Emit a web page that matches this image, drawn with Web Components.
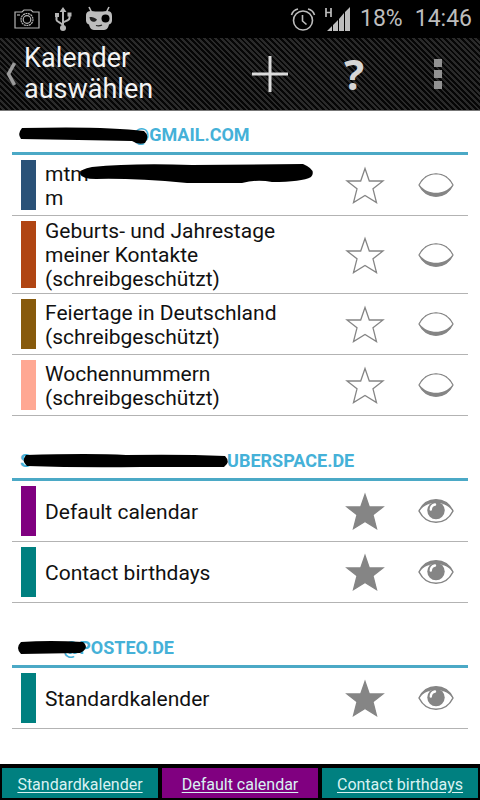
<!DOCTYPE html>
<html lang="de">
<head>
<meta charset="utf-8">
<meta name="viewport" content="width=device-width, initial-scale=1">
<title>Kalender auswählen</title>
<style>
body{margin:0;background:#fff;color:#111;font-family:Roboto,"Liberation Sans",sans-serif}
</style>
</head>
<body>
<calendar-app></calendar-app>
<script>
const define = (name, html, setup) => {
  const template = document.createElement('template');
  template.innerHTML = html;
  customElements.define(name, class extends HTMLElement {
    constructor() {
      super();
      this.attachShadow({mode: 'open'}).append(template.content.cloneNode(true));
    }
    connectedCallback() { if (setup) setup(this, this.shadowRoot); }
  });
};

define('status-bar', `
<style>
:host{display:flex;align-items:center;justify-content:space-between;height:38px;padding:0 8px 0 13px;background:#000;color:#bdbdbd;font-size:23px;line-height:38px}
div{display:flex;align-items:center}
.left{gap:13px}.right{gap:9px}
svg{display:block}
.time{margin-left:3px}
</style>
<div class="left">
<svg width="28" height="24" viewBox="0 0 28 24" fill="none" stroke="#b5b5b5" stroke-width="1.2"><path d="M2 5h7l2-2h7l2 2h6v16H2z"/><circle cx="14" cy="12.500" r="6" stroke-dasharray="2 .6"/><circle cx="14" cy="12.500" r="3.800"/><path d="M4 8h3"/></svg>
<svg width="18" height="26" viewBox="0 0 18 26" fill="none" stroke="#b5b5b5" stroke-width="2"><path d="M9 5v16M2.500 10v4c0 2 6.500 3 6.500 6M15.500 9v3c0 3-6.500 3-6.500 5"/><path d="M5.500 6 9 1l3.500 5zM1 7h4v4H1zM13.500 6.500h4v4h-4z" fill="#b5b5b5" stroke="none"/><circle cx="9" cy="22" r="3" fill="#b5b5b5" stroke="none"/></svg>
<svg width="28" height="26" viewBox="0 0 28 26"><path d="M4 1 6.500 6M24 1 21.500 6" stroke="#bdbdbd" stroke-width="1.600"/><path d="M1 10C1 6 3 5 6.500 5q7.500 1 15 0C25 5 27 6 27 10v4.500c0 2.500-1.500 3.500-3 4-1 4.500-3 5.500-6 5.500h-8c-3 0-5-1-6-5.500-1.500-.5-3-1.500-3-4z" fill="#bdbdbd"/><path d="M4.500 11c3 0 5 .5 7.500 2.500-1.500 3.500-7 3.500-7.500-2.500z" fill="#222"/><circle cx="20.500" cy="12.500" r="4" fill="#000"/><path d="M11 19.500q3 1 6-.5" stroke="#222" stroke-width="1.300" fill="none"/></svg>
</div>
<div class="right">
<svg width="26" height="26" viewBox="0 0 26 26" fill="none" stroke="#bdbdbd" stroke-width="1.600"><circle cx="13" cy="14.500" r="9.500"/><path d="M12.500 9v6l4 3.500M1.500 9Q3 4 8 3M24.500 9Q23 4 18 3"/></svg>
<svg width="26" height="26" viewBox="0 0 26 26"><path d="M1 2v9M6 2v9M1 6.500h5" stroke="#bdbdbd" stroke-width="1.700"/><path d="M2 25 7 20V25zM8 25v-6l5-5v11zM14 25V13l5-6v18zM20 25V6l5-5v24z" fill="#bdbdbd"/></svg>
<span>18%</span><span class="time">14:46</span>
</div>`);

define('action-bar', `
<style>
:host{display:flex;align-items:center;height:73px;box-sizing:border-box;padding-left:6px;border-bottom:1px solid #777;color:#f3f3f3;background:repeating-linear-gradient(45deg,#060606 0 2px,#2a2a2a 2px 4px)}
button{display:flex;align-items:center;justify-content:center;border:0;padding:0;background:none;height:72px;width:84px;color:#d6d6d6;font-family:"Noto Sans",sans-serif;font-weight:700;font-size:42px;line-height:48px}
.back{width:auto;flex:1;min-width:0;justify-content:flex-start;gap:8px;color:inherit}
h1{margin:0;font:400 27px/31px Roboto,sans-serif;text-align:left;width:150px}
svg{flex:none}
</style>
<button class="back"><svg width="10" height="24" viewBox="0 0 10 24"><path d="M8.500 1 2.500 12 8.500 23" fill="none" stroke="#9b9b9b" stroke-width="3.500"/></svg><h1>Kalender auswählen</h1></button>
<button aria-label="Hinzufügen"><svg width="36" height="36" viewBox="0 0 36 36"><path d="M18 0v36M0 18h36" stroke="#dcdcdc" stroke-width="3"/></svg></button>
<button>?</button>
<button aria-label="Menü"><svg width="8" height="30" viewBox="0 0 8 30" fill="#929292"><path d="M0 0h8v8H0zM0 11h8v8H0zM0 22h8v8H0z"/></svg></button>`);

define('calendar-group', `
<style>
:host{display:block;margin-bottom:21px}
h2{position:relative;margin:0;padding:12px 8px 5px;border-bottom:3px solid #4ba9c6;color:#45b1d8;font-size:18px;line-height:24px;font-weight:700}
</style>
<section><h2><slot name="title"></slot></h2><slot></slot></section>`);

define('redacted-mark', `
<style>
:host{display:inline-block;position:relative;height:18px;vertical-align:middle}
svg{position:absolute;left:0;top:0;overflow:visible}
</style><svg height="20"><path/></svg>`, (host, root) => {
  host.style.width = host.getAttribute('space') + 'px';
  root.querySelector('svg').setAttribute('width', host.getAttribute('space'));
  root.querySelector('path').setAttribute('d', host.getAttribute('shape'));
});

define('star-toggle', `
<style>
:host{display:block}
label{position:relative;display:flex;align-items:center;justify-content:center;width:78px;height:40px}
input{position:absolute;inset:0;margin:0;width:100%;height:100%;opacity:0}
svg{display:block}
path{fill:#fff;stroke:#858585;stroke-width:1.300}
:checked+svg path{fill:#858585}
</style>
<label><input type="checkbox" aria-label="Favorit"><svg width="40" height="38" viewBox="0 0 40 38"><path d="M20 2.500 24.300 15H38L28 22.800 31.500 36.500 20 29.500 8.500 36.500 12 22.800 2 15H15.700z"/></svg></label>`,
(host, root) => { root.querySelector('input').checked = host.hasAttribute('on'); });

define('visibility-toggle', `
<style>
:host{display:block}
label{position:relative;display:flex;align-items:center;justify-content:center;width:64px;height:40px}
input{position:absolute;inset:0;margin:0;width:100%;height:100%;opacity:0}
.open,:checked~.shut{display:none}
:checked~.open{display:block}
</style>
<label><input type="checkbox" aria-label="Sichtbar">
<svg class="shut" width="38" height="26" viewBox="0 0 38 26"><path d="M2 13C6 5 12 1.800 19 1.800S32 5 36 13C32 21 26 24.300 19 24.300S6 21 2 13z" fill="#858585" stroke="#858585" stroke-width="1.300" stroke-linejoin="round"/><path d="M2.700 13C7 5 12.500 2.500 19 2.500S31 5 35.300 13C31 18.500 25 20.800 19 20.800S7 18.500 2.700 13z" fill="#fff"/></svg>
<svg class="open" width="38" height="26" viewBox="0 0 38 26"><path d="M2 13C6 5 12 1.800 19 1.800S32 5 36 13C32 21 26 24.300 19 24.300S6 21 2 13z" fill="#fff" stroke="#858585" stroke-width="1.500" stroke-linejoin="round"/><path d="M2 13C6 5 12 1.800 19 1.800S32 5 36 13C31 7 25 5 19 5S7 7 2 13z" fill="#858585"/><circle cx="19" cy="12.500" r="8.700" fill="#858585"/><path d="M13.800 11.500C13.800 8.800 15.800 7 18 6.500" stroke="#fff" stroke-width="2.400" stroke-linecap="round" fill="none"/></svg></label>`,
(host, root) => { root.querySelector('input').checked = host.hasAttribute('on'); });

define('calendar-row', `
<style>
:host{display:flex;align-items:center;min-height:60px;border-bottom:1px solid #b3b3b3}
i{align-self:stretch;flex:none;width:15px;margin:5px 9px;background:var(--calendar)}
p{flex:1;min-width:0;margin:0;padding:3px 0 2px;font-size:21px;line-height:24px}
</style>
<i></i><p><slot></slot></p><star-toggle></star-toggle><visibility-toggle></visibility-toggle>`,
(host, root) => {
  root.host.style.setProperty('--calendar', host.getAttribute('color'));
  if (host.hasAttribute('on')) for (const name of ['star-toggle', 'visibility-toggle']) {
    const toggle = root.querySelector(name);
    toggle.setAttribute('on', '');
    toggle.shadowRoot.querySelector('input').checked = true;
  }
});

define('quick-link', `
<style>
:host{display:flex;flex:1;align-items:center;justify-content:center;background:var(--calendar);height:30px}
a{color:#d9f2f2;font-size:16px;line-height:24px;padding-top:4px;white-space:nowrap;text-underline-offset:2px}
</style>
<a href="#"><slot></slot></a>`, host => host.style.setProperty('--calendar', host.getAttribute('color')));

define('calendar-app', `
<style>
:host{display:flex;flex-direction:column;min-height:100vh}
main{flex:1;padding:0 12px}
footer{display:flex;gap:4px;padding:4px 2px 2px;background:#000}
</style>
<status-bar></status-bar>
<action-bar></action-bar>
<main>
<calendar-group><span slot="title"><redacted-mark space="113" shape="M2 1Q-3 7 1 12 60 13 112 14 118 18 125 16 130 9 124 4 85-1 2 1z"></redacted-mark>@GMAIL.COM</span>
<calendar-row color="#2a5278">mtm<redacted-mark space="220" shape="M-9 8Q-9 3 3 1 43-3 103-1L214-2Q228 4 222 11 213 16 183 16 168 13 153 17L98 17Q43 12 7 13-7 13-9 8z"></redacted-mark><br>m</calendar-row>
<calendar-row color="#b04513">Geburts- und Jahrestage meiner Kontakte (schreibgeschützt)</calendar-row>
<calendar-row color="#875a0c">Feiertage in Deutschland (schreibgeschützt)</calendar-row>
<calendar-row color="#ffa893">Wochennummern (schreibgeschützt)</calendar-row>
</calendar-group>
<calendar-group><span slot="title">S<redacted-mark space="196" shape="M-5 2Q-10 8-4 13 50 15 110 14L193 14Q200 9 194 3 150 1 95 2 60 0-5 2z"></redacted-mark>UBERSPACE.DE</span>
<calendar-row color="#800080" on>Default calendar</calendar-row>
<calendar-row color="#008080" on>Contact birthdays</calendar-row>
</calendar-group>
<calendar-group><span slot="title"><redacted-mark space="43" shape="M1 2Q-5 8 1 14L60 13Q70 8 63 2 30 0 1 2z"></redacted-mark>@POSTEO.DE</span>
<calendar-row color="#008080" on>Standardkalender</calendar-row>
</calendar-group>
</main>
<footer><quick-link color="#008080">Standardkalender</quick-link><quick-link color="#800080">Default calendar</quick-link><quick-link color="#008080">Contact birthdays</quick-link></footer>`);
</script>
</body>
</html>
